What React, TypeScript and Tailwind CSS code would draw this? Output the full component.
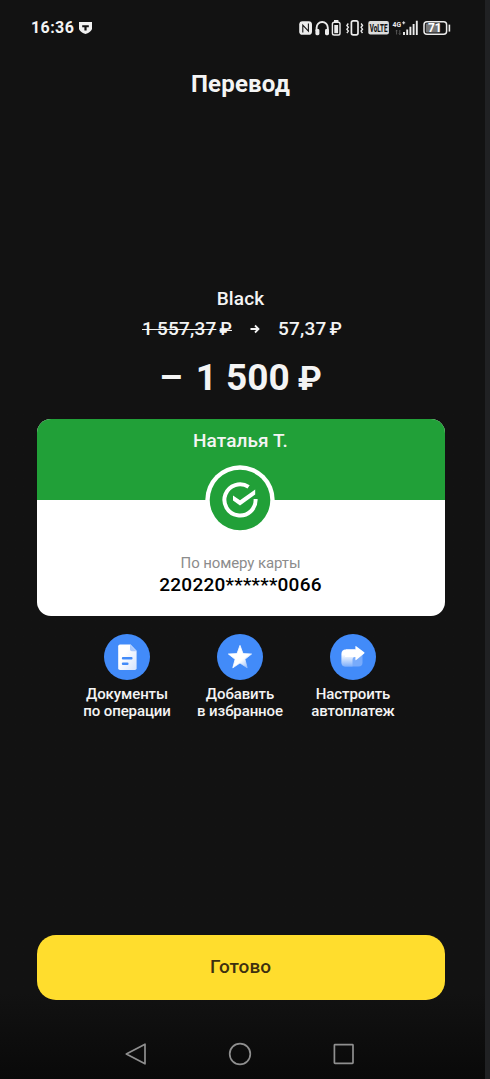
import React from 'react';

interface ActionItem {
  id: string;
  lines: string[];
  icon: React.ReactNode;
}

const ShieldIcon = () => (
  <svg width="13" height="12" viewBox="0 0 13 12" className="block">
    <path d="M0 0H13V6.2C13 8.8 10.3 10.6 6.5 12C2.7 10.6 0 8.8 0 6.2Z" fill="#f1f1f1" />
    <path d="M3.2 3.2H9.8V5.2H7.6V8.4H5.4V5.2H3.2Z" fill="#121212" />
  </svg>
);

const StatusIcons = () => (
  <svg width="154" height="18" viewBox="298 19 154 18" className="block" fill="none">
    {/* nfc */}
    <rect x="299.2" y="21.2" width="12.8" height="13.6" rx="3.4" fill="#ececec" />
    <path d="M302.8 32.6V25.2L308.4 31.2V23.4" stroke="#121212" strokeWidth="1.1" />
    {/* headphones */}
    <path d="M316.6 31V27.8A5.6 5.8 0 0 1 327.8 27.8V31" stroke="#ececec" strokeWidth="1.9" />
    <rect x="315.4" y="29" width="4" height="6.2" rx="1.4" fill="#ececec" />
    <rect x="325" y="29" width="4" height="6.2" rx="1.4" fill="#ececec" />
    <rect x="334" y="20" width="4.4" height="2" fill="#ececec" />
    <rect x="332.4" y="22.2" width="7.6" height="12.8" rx="1.8" stroke="#ececec" strokeWidth="1.4" />
    <rect x="334.3" y="25" width="3.8" height="8.2" fill="#ececec" />
    {/* vibration */}
    <rect x="351.4" y="20.8" width="6.6" height="14" rx="1.8" stroke="#ececec" strokeWidth="1.7" />
    <path d="M348.3 23.5L346.9 25.4L348.3 27.3L346.9 29.2L348.3 31.1L346.9 33M361.1 23.5L362.5 25.4L361.1 27.3L362.5 29.2L361.1 31.1L362.5 33" stroke="#ececec" strokeWidth="1.4" />
    {/* volte */}
    <rect x="368.3" y="21" width="20.6" height="13.4" rx="2" fill="#dcdcdc" />
    <text transform="translate(369.8 31.5) scale(0.6 1)" fontSize="10.5" fontWeight="800" fill="#121212" className="font-[Roboto,sans-serif]">VoLTE</text>
    {/* signal */}
    <text transform="translate(392.6 26.8) scale(0.85 1)" fontSize="8" fontWeight="700" fill="#ececec" className="font-[Roboto,sans-serif]">4G</text>
    <path d="M402.2 22.8H405.2M403.7 21.3V24.3" stroke="#ececec" strokeWidth="1" />
    <path d="M396.6 34.5V30.2M399.8 30V34.5M395.6 31.2L396.6 30.2L397.6 31.2M398.8 33.5L399.8 34.5L400.8 33.5" stroke="#666" strokeWidth="0.8" />
    <path d="M404 35V32M407.2 35V29.6M410.4 35V26.8M413.6 35V24M416.8 35V20.8" stroke="#ececec" strokeWidth="1.9" />
    {/* battery */}
    <rect x="424" y="21.7" width="22.6" height="12.6" rx="3" stroke="#ececec" strokeWidth="1.5" />
    <rect x="425.8" y="23.4" width="14.4" height="9.2" rx="1" fill="#757575" />
    <path d="M449.4 24.6V31.6" stroke="#ececec" strokeWidth="1.6" />
    <text x="434.8" y="32.2" textAnchor="middle" fontSize="12" fontWeight="700" fill="#fff" className="font-[Roboto,sans-serif]">71</text>
  </svg>
);

const CheckLogo = () => (
  <svg width="70" height="70" viewBox="0 0 70 70" className="block" fill="none">
    <circle cx="35" cy="35" r="34.7" fill="#fff" />
    <circle cx="35" cy="35" r="30.3" fill="#21a038" />
    <path d="M43.6 21.9A15.6 15.6 0 1 0 50.6 34" stroke="#fff" strokeWidth="4" />
    <path d="M28 30.4V35.6L35 40.6L50.2 29.4V24.4L35 35.3Z" fill="#fff" />
  </svg>
);

const DocIcon = () => (
  <svg width="46" height="46" viewBox="0 0 46 46" className="block">
    <defs>
      <linearGradient id="doc" x1="0" y1="0" x2="1" y2="1">
        <stop offset="0.35" stopColor="#fff" />
        <stop offset="1" stopColor="#d3e2fd" />
      </linearGradient>
    </defs>
    <path d="M16 10.5H26.5L32.6 16.8V34.2Q32.6 36 30.8 36H16Q14.2 36 14.2 34.2V12.3Q14.2 10.5 16 10.5Z" fill="url(#doc)" />
    <path d="M26 10.5L32.6 17.3H27.8Q26 17.3 26 15.5Z" fill="#a9c8fd" />
    <path d="M19 24.2H27.4M19 29.8H23.4" stroke="#428bf9" strokeWidth="2.4" strokeLinecap="round" />
  </svg>
);

const StarIcon = () => (
  <svg width="46" height="46" viewBox="0 0 46 46" className="block">
    <defs>
      <linearGradient id="star" x1="0.3" y1="0.4" x2="0.85" y2="1">
        <stop offset="0.45" stopColor="#fff" />
        <stop offset="1" stopColor="#8fb9fc" />
      </linearGradient>
    </defs>
    <path d="M23 11.4L26 19.6L34.6 20L27.9 25.3L30.2 33.8L23 29L15.8 33.8L18.1 25.3L11.4 20L20 19.6Z" fill="url(#star)" stroke="url(#star)" strokeWidth="0.8" strokeLinejoin="round" />
  </svg>
);

const AutopayIcon = () => (
  <svg width="46" height="46" viewBox="0 0 46 46" className="block">
    <defs>
      <linearGradient id="pay" x1="0" y1="0" x2="0" y2="1">
        <stop offset="0.3" stopColor="#fff" />
        <stop offset="1" stopColor="#7eaffb" />
      </linearGradient>
    </defs>
    <rect x="11.5" y="15.5" width="21" height="17" rx="4" fill="#78abfb" />
    <path d="M11.5 28.5V20Q11.5 15.5 16 15.5H25V23H25Q22.5 23 22.5 26V32.5H15.5Q11.5 32.5 11.5 28.5Z" fill="url(#pay)" />
    <path d="M16 15.5H25.4V12.6Q25.4 11.6 26.2 12.3L34.2 18.3Q34.9 18.9 34.2 19.5L26.2 26Q25.4 26.6 25.4 25.6V23H15Z" fill="#fff" />
  </svg>
);

const actions: ActionItem[] = [
  { id: 'docs', lines: ['Документы', 'по операции'], icon: <DocIcon /> },
  { id: 'favorite', lines: ['Добавить', 'в избранное'], icon: <StarIcon /> },
  { id: 'autopay', lines: ['Настроить', 'автоплатеж'], icon: <AutopayIcon /> },
];

const StatusBar = () => (
  <header className="flex h-14 items-center justify-between pl-[31px] pr-[33px]">
    <div className="flex items-center gap-[5px]">
      <span className="text-base font-bold tracking-[0.4px]">16:36</span>
      <ShieldIcon />
    </div>
    <StatusIcons />
  </header>
);

const TransferCard = () => (
  <section className="relative mx-auto mt-[18.5px] h-[197px] w-[408px] overflow-hidden rounded-[14px] bg-white text-center">
    <div className="h-[81px] bg-[#21a038] pt-2.5">
      <h2 className="text-[19px] font-medium leading-6 tracking-[0.1px]">Наталья Т.</h2>
    </div>
    <div className="absolute left-[168.5px] top-[46px]">
      <CheckLogo />
    </div>
    <p className="mt-[52px] text-[15px] leading-[22px] tracking-[-0.1px] text-[#8c8c8c]">По номеру карты</p>
    <p className="text-[19px] font-medium leading-[22px] tracking-[0.25px] text-black">220220******0066</p>
  </section>
);

const NavBar = () => (
  <nav className="flex h-[51px] items-center justify-center gap-[80px] text-[#8f8f8f]">
    <button aria-label="Back">
      <svg width="24" height="24" viewBox="0 0 24 24" className="block" fill="none" stroke="currentColor" strokeWidth="1.7" strokeLinejoin="round">
        <path d="M21 2.2V21.8L2.3 12Z" />
      </svg>
    </button>
    <button aria-label="Home">
      <svg width="24" height="24" viewBox="0 0 24 24" className="block" fill="none" stroke="currentColor" strokeWidth="1.7">
        <circle cx="12" cy="12" r="10.3" />
      </svg>
    </button>
    <button aria-label="Recent">
      <svg width="24" height="24" viewBox="0 0 24 24" className="block" fill="none" stroke="currentColor" strokeWidth="1.7" strokeLinejoin="round">
        <rect x="2.4" y="2.7" width="18.6" height="18.6" rx="0.6" />
      </svg>
    </button>
  </nav>
);

const App: React.FC = () => {
  return (
    <div className="flex h-[1079px] w-[490px] bg-[#202123] font-[Roboto,'Noto_Sans',sans-serif] text-[#f4f4f4]">
      <div className="flex w-[485px] flex-col bg-linear-to-b from-[#121212] from-92% to-[#090909]">
        <StatusBar />

        <div className="flex w-[481px] grow flex-col">
          <h1 className="mt-3 text-center text-2xl font-bold leading-8 tracking-[0.2px]">Перевод</h1>

          <div className="mt-[187px] text-center">
            <p className="text-[19px] font-medium leading-6 tracking-[0.15px]">Black</p>
            <div className="mt-1.5 flex items-center justify-center pl-[3px] text-[19px] font-medium leading-6 tracking-[0.2px]">
              <span className="line-through decoration-1 [word-spacing:-1px]">
                1 557,37<span className="ml-[3px] text-[18px]">₽</span>
              </span>
              <svg width="10" height="10" viewBox="0 0 10 10" className="mx-[18px] block" fill="none" stroke="currentColor" strokeWidth="1.8">
                <path d="M0.5 5H8M5 1.5L8.5 5L5 8.5" />
              </svg>
              <span>
                57,37<span className="ml-[3px] text-[18px]">₽</span>
              </span>
            </div>
            <p className="mt-[15px] text-[37px] font-bold leading-[44px]">
              <span className="mr-1">–</span> 1 500<span className="ml-2 text-[34px]">₽</span>
            </p>
          </div>

          <TransferCard />

          <div className="mt-[18px] flex justify-center pr-px">
            {actions.map((action) => (
              <button key={action.id} className="flex w-[113px] flex-col items-center">
                <span className="rounded-full bg-[#428bf9]">{action.icon}</span>
                <span className="mt-1.5 text-[15px] font-medium leading-[17px] tracking-[-0.1px]">
                  {action.lines.map((line) => (
                    <span key={line} className="block whitespace-nowrap">{line}</span>
                  ))}
                </span>
              </button>
            ))}
          </div>

          <div className="mt-auto px-[36.5px]">
            <button className="h-[65px] w-full rounded-[19px] bg-[#ffdd2d] text-[19px] font-medium text-[#3d3010]">Готово</button>
          </div>
          <div className="mt-7 pr-px">
            <NavBar />
          </div>
        </div>
      </div>
    </div>
  );
};

export default App;
